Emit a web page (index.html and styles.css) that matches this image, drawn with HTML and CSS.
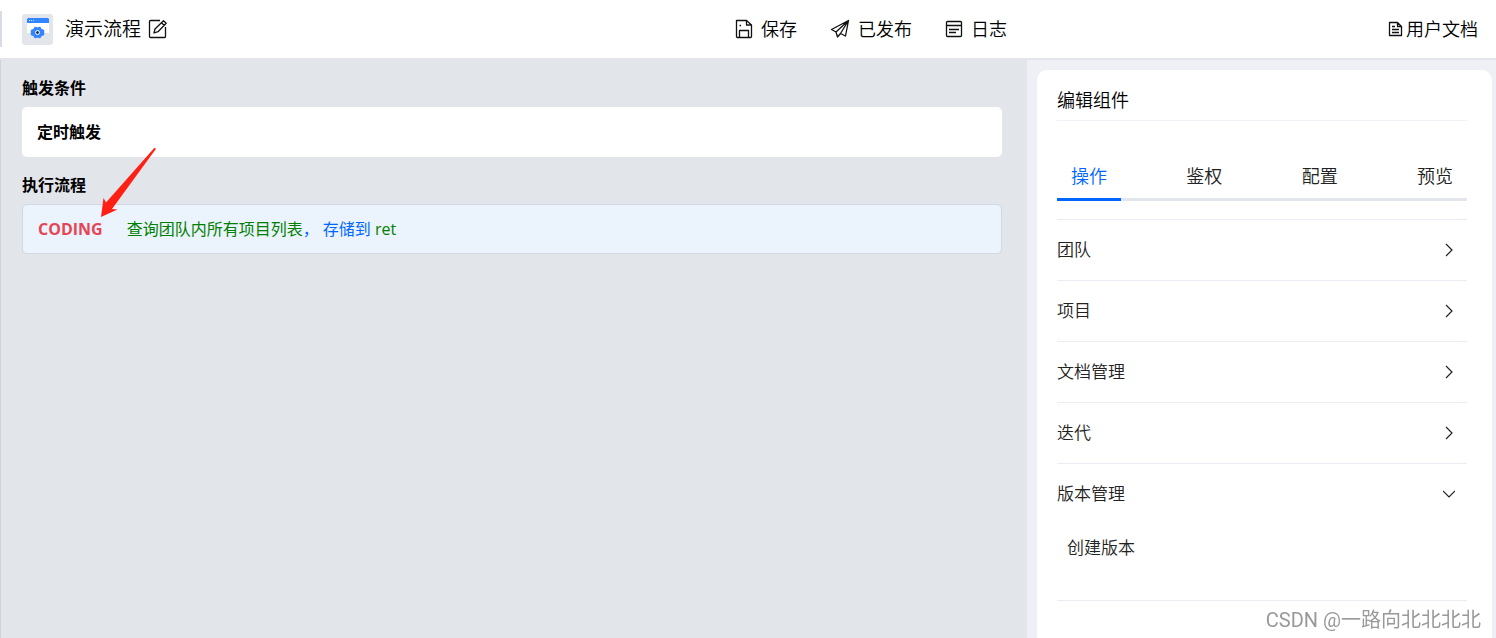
FILE: index.html
```
<!DOCTYPE html>
<html lang="zh-CN">

<head>
  <meta charset="UTF-8">
  <meta name="viewport" content="width=device-width, initial-scale=1.0">
  <title>演示流程</title>
  <link rel="stylesheet" href="styles.css">
</head>

<body>
  <header class="header">
    <div class="header-left">
      <span class="logo">
        <svg width="22" height="22" viewBox="0 0 22 22">
          <path fill="#fff" d="M0 4h22v11H0z" />
          <path fill="#3385ff" d="M1 0h20l1 1v4H0V1z" />
          <path stroke="#cfe1ff" d="M2 2.500h1M4 2.500h1M6 2.500h1" />
          <path fill="#3385ff" stroke="#3385ff" stroke-width="1.500" stroke-linejoin="round"
            d="M8 9.500l2.500.8L13 9.500l1 2 2.500 1v4l-2.500 1-1 2-2.500-.8L8 19.500l-1-2-2.500-1v-4l2.500-1z" />
          <circle cx="10.500" cy="14.500" r="2" fill="#1b3b70" stroke="#fff" />
        </svg>
      </span>
      <h1 class="flow-name">演示流程</h1>
      <button class="icon-button" type="button" aria-label="编辑名称">
        <svg class="icon" width="20" height="20" viewBox="0 0 20 20">
          <path d="M12 1.500H2.500Q1.500 1.500 1.500 2.500v15q0 1 1 1h14q1 0 1-1V8" />
          <path d="M6 14l1-4L15.500 1.800l2.700 2.500L10 12.700z M13.500 3.800l2.600 2.500" />
        </svg>
      </button>
    </div>

    <nav class="header-actions">
      <button class="action" type="button">
        <svg class="icon" width="18" height="20" viewBox="0 0 18 20">
          <path d="M1.500 1.500h10L16.500 6v11.500q0 1-1 1h-13q-1 0-1-1z" />
          <path d="M11.500 1.500V6h5M4.500 18.500v-7h9v7M4.500 6.500H6" />
        </svg>
        保存
      </button>
      <button class="action" type="button">
        <svg class="icon" width="20" height="20" viewBox="0 0 20 20">
          <path d="M18.500 1.500L1.500 10.500 6 13 18.500 1.500l-3 15.500-5-2.500L18.500 1.500M6 13l1.500 5 3-3.500" />
        </svg>
        已发布
      </button>
      <button class="action" type="button">
        <svg class="icon" width="18" height="20" viewBox="0 0 18 20">
          <rect x="1.500" y="2.500" width="15" height="15" rx="1" />
          <path d="M2 6.500h14M4 10.500h10M4 13.500h7" />
        </svg>
        日志
      </button>
    </nav>

    <a class="docs-link" href="#docs">
      <svg class="icon" width="15" height="18" viewBox="0 0 15 18">
        <path d="M1.500 2.500h8l4 4v9h-12z M9.500 2.500v4h4M4 6.500h3M4 9.500h7M4 12.500h7" />
      </svg>
      用户文档
    </a>
  </header>

  <div class="content">
    <main class="flow">
      <h2 class="flow-label">触发条件</h2>
      <div class="card trigger">定时触发</div>

      <h2 class="flow-label">执行流程</h2>
      <div class="card step">
        <span class="step-type">CODING</span>
        <span class="step-text">查询团队内所有项目列表<span class="step-link">， 存储到</span> ret</span>
      </div>

      <svg class="arrow" width="60" height="72" viewBox="0 0 60 72">
        <path fill="#ff2015" d="M3 73L5.500 54 8 58.500 56.500 3.700l1.500 1L14 65l5.500.5z" />
      </svg>
    </main>

    <aside class="side">
      <section class="panel">
        <h2 class="panel-title">编辑组件</h2>

        <div class="tabs" role="tablist">
          <button class="tab active" type="button" role="tab" aria-selected="true">操作</button>
          <button class="tab" type="button" role="tab" aria-selected="false">鉴权</button>
          <button class="tab" type="button" role="tab" aria-selected="false">配置</button>
          <button class="tab" type="button" role="tab" aria-selected="false">预览</button>
        </div>

        <div class="groups">
          <button class="group" type="button" aria-expanded="false">团队
            <svg class="chevron" width="12" height="16" viewBox="0 0 12 16"><path d="M3 2l6 6-6 6" /></svg>
          </button>
          <button class="group" type="button" aria-expanded="false">项目
            <svg class="chevron" width="12" height="16" viewBox="0 0 12 16"><path d="M3 2l6 6-6 6" /></svg>
          </button>
          <button class="group" type="button" aria-expanded="false">文档管理
            <svg class="chevron" width="12" height="16" viewBox="0 0 12 16"><path d="M3 2l6 6-6 6" /></svg>
          </button>
          <button class="group" type="button" aria-expanded="false">迭代
            <svg class="chevron" width="12" height="16" viewBox="0 0 12 16"><path d="M3 2l6 6-6 6" /></svg>
          </button>
          <button class="group" type="button" aria-expanded="true">版本管理
            <svg class="chevron" width="12" height="16" viewBox="0 0 12 16"><path d="M0 5l6 6 6-6" /></svg>
          </button>
          <div class="group-body">
            <button class="group-item" type="button">创建版本</button>
          </div>
        </div>
      </section>
    </aside>
  </div>

  <div class="watermark">CSDN @一路向北北北北</div>
</body>

</html>
```

FILE: styles.css
```
* {
  box-sizing: border-box;
}

body {
  margin: 0;
  min-height: 100vh;
  display: flex;
  flex-direction: column;
  font-family: "Open Sans", "Noto Sans CJK SC", sans-serif;
  font-weight: 350;
  font-size: 18px;
  line-height: 24px;
  color: #000;
  background: #eff0f5;
}

button {
  padding: 0;
  border: none;
  background: none;
  font: inherit;
  color: inherit;
  cursor: pointer;
}

h1,
h2 {
  margin: 0;
  font-weight: inherit;
}

.icon {
  fill: none;
  stroke: #111;
  stroke-width: 1.3;
  stroke-linejoin: round;
}

/* Header */
.header {
  display: grid;
  grid-template-columns: 49% auto 1fr;
  align-items: center;
  height: 60px;
  background: #fff;
  border-bottom: 2px solid #e2e5ea;
}

.header-left {
  display: flex;
  align-items: center;
  height: 36px;
  padding-left: 20px;
  border-left: 2px solid #d9dce6;
}

.logo {
  display: flex;
  align-items: center;
  justify-content: center;
  width: 31px;
  height: 31px;
  margin-right: 12px;
  border-radius: 3px;
  background: #e2e5ea;
}

.flow-name {
  margin-right: 7px;
  font-size: 19px;
}

.icon-button {
  display: flex;
}

.header-actions {
  display: flex;
  gap: 33px;
  padding-left: 2px;
}

.action {
  display: flex;
  align-items: center;
  gap: 8px;
}

.docs-link {
  display: flex;
  align-items: center;
  justify-self: end;
  gap: 3px;
  margin-right: 18px;
  color: inherit;
  text-decoration: none;
}

.content {
  flex: 1;
  display: flex;
}

/* Flow editor */
.flow {
  position: relative;
  flex: 1;
  padding: 16px 25px 16px 21px;
  border-left: 1px solid #cfd2d8;
  background: #e2e5ea;
  font-size: 16px;
}

.flow-label {
  margin-bottom: 7px;
  font-size: 16px;
  font-weight: 700;
}

.card {
  display: flex;
  align-items: center;
  min-height: 50px;
  padding: 0 15px;
  border-radius: 5px;
}

.trigger {
  margin-bottom: 16px;
  background: #fff;
  font-weight: 700;
}

.step {
  gap: 24px;
  border: 1px solid #d2d9e2;
  background: #ebf3fd;
}

.step-type {
  font-weight: 700;
  color: #e64552;
}

.step-text {
  font-weight: 400;
  color: #008000;
}

.step-link {
  color: #0066ff;
}

.arrow {
  position: absolute;
  left: 97px;
  top: 84px;
  overflow: visible;
}

/* Component panel */
.side {
  display: flex;
  width: 469px;
  padding: 10px 4px 0 10px;
}

.panel {
  flex: 1;
  padding: 18px 25px 0 20px;
  border-radius: 10px 10px 0 0;
  background: #fff;
}

.panel-title {
  padding-bottom: 8px;
  border-bottom: 1px solid #f0f1f4;
  font-size: 18px;
}

.tabs {
  display: flex;
  justify-content: space-between;
  margin: 43px 0 18px;
  box-shadow: inset 0 -3px #e2e5ec;
  color: #222;
}

.tab {
  padding: 0 14px 10px;
  border-bottom: 3px solid transparent;
}

.tab.active {
  color: #0066ff;
  border-bottom-color: #0066ff;
}

.groups {
  border-bottom: 1px solid #ebecf0;
  font-size: 17px;
  color: #222;
}

.group {
  display: flex;
  align-items: center;
  justify-content: space-between;
  width: 100%;
  height: 61px;
  padding-right: 12px;
  border-top: 1px solid #ebecf4;
}

.chevron {
  fill: none;
  stroke: #222;
  stroke-width: 1.2;
}

.group-body {
  padding: 12px 10px 40px;
}

.watermark {
  position: fixed;
  right: 15px;
  bottom: 6px;
  font-family: Roboto, "Noto Sans CJK SC", sans-serif;
  font-size: 20px;
  font-weight: 400;
  color: #999;
}
```
